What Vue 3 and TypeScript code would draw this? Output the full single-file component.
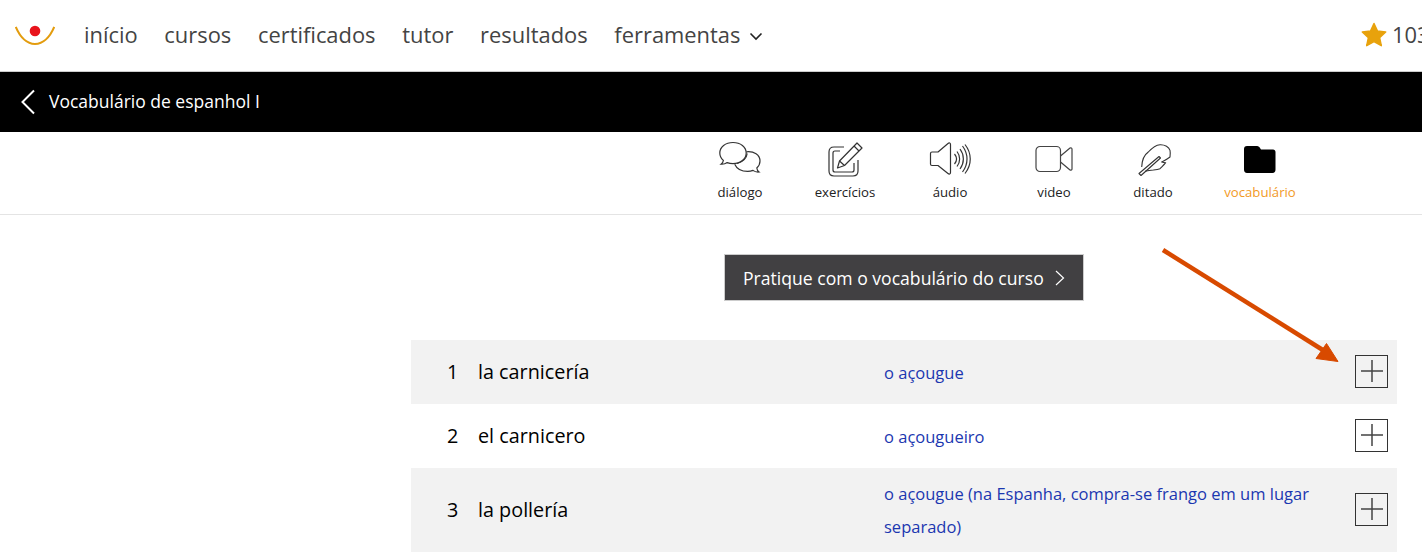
<script setup lang="ts">
const links = ['início', 'cursos', 'certificados', 'tutor', 'resultados']
const rows = [
  { n: 1, word: 'la carnicería', tr: 'o açougue', alt: true },
  { n: 2, word: 'el carnicero', tr: 'o açougueiro', alt: false },
  { n: 3, word: 'la pollería', tr: 'o açougue (na Espanha, compra-se frango em um lugar separado)', alt: true },
]
</script>

<template>
  <div class="page">
    <header class="nav">
      <svg class="logo" width="40" height="22" viewBox="0 0 40 22">
        <path d="M0.800 2C5 12 12 19 20 19S35 12 39.200 2" fill="none" stroke="#e39c0e" stroke-width="2" />
        <circle cx="20" cy="6" r="5.300" fill="#e8141c" />
      </svg>
      <nav class="links">
        <a v-for="l in links" :key="l">{{ l }}</a>
        <a class="tools">ferramentas
          <svg width="14" height="9" viewBox="0 0 14 9"><path d="M1.500 1.500L7 7L12.500 1.500" fill="none" stroke="#222" stroke-width="1.600" /></svg>
        </a>
      </nav>
      <div class="score">
        <svg width="26" height="25" viewBox="0 0 26 25"><path d="M13 1.500l3.500 7.600 8.200.9-6.100 5.600 1.700 8.100-7.300-4.100-7.300 4.100 1.700-8.100L1.300 10l8.200-.9z" fill="#e8a20c" stroke="#e8a20c" stroke-width="1.500" stroke-linejoin="round" /></svg>
        <span>1030</span>
      </div>
    </header>

    <div class="course">
      <svg width="16" height="26" viewBox="0 0 16 26"><path d="M14 1.500L2.500 13L14 24.500" fill="none" stroke="#fff" stroke-width="2" /></svg>
      <span class="course-title">Vocabulário de espanhol I</span>
    </div>

    <div class="tabs">
      <div class="tab t1">
        <svg width="44" height="36" viewBox="0 0 44 36" fill="none" stroke="#333" stroke-width="1.200">
          <path d="M15 1.500C7.500 1.500 1.800 6 1.800 12c0 3 1.400 5.600 3.600 7.400-.2 1.400-1 2.800-2.400 3.800 2.400.2 4.600-.4 6.200-1.600 1.800.7 3.600 1 5.800 1 7.500 0 13.200-4.600 13.200-10.600S22.500 1.500 15 1.500z" />
          <path d="M28.500 10.800C36 10 42 14 42 20c0 3-1.400 5.400-3.200 7 .2 1.500.8 3 2.200 4-2.300.2-4.500-.4-6-1.600-1.700.7-3.500 1-5.300 1-6 0-11-2.800-13-7.200" />
          <path d="M29.200 12.500c-.6 4.500-4.600 8.500-10.200 10" />
        </svg>
        <span>diálogo</span>
      </div>
      <div class="tab t2">
        <svg width="36" height="36" viewBox="0 0 36 36" fill="none" stroke="#333" stroke-width="1.200" stroke-linejoin="round">
          <path d="M17 6H7C3.500 6 2 8 2 11v19c0 3.500 2 5 5 5h19c3.500 0 5-2 5-5V19" />
          <path d="M13 10H8C6.500 10 6 11 6 12v17c0 1.500.8 2 2 2h17c1.500 0 2-.8 2-2v-7" />
          <path d="M30 2l5 5-17.500 17.500-7 2.500 2-7z" />
          <path d="M27 5l5 5M12.500 20l5 4.500" />
        </svg>
        <span>exercícios</span>
      </div>
      <div class="tab t3">
        <svg width="42" height="34" viewBox="0 0 42 34" fill="none" stroke="#333" stroke-width="1.200" stroke-linejoin="round">
          <path d="M1.500 11.500C1.500 10.500 2 10 3 10h6L19 1.500c1.200-1 2.500-.5 2.500 1v28c0 1.500-1.300 2-2.500 1L9 23.500H3c-1 0-1.500-.5-1.500-1.500z" />
          <path d="M25.500 12c2.500 3 2.500 7 0 10M28 9.500c3.500 4.500 3.500 10.500 0 15M31 7c4.500 6 4.500 14 0 20M33.500 4c6 8 6 18 0 26M36 2.500c7 9 7 20 0 29" />
        </svg>
        <span>áudio</span>
      </div>
      <div class="tab t4">
        <svg width="38" height="27" viewBox="0 0 38 27" fill="none" stroke="#444" stroke-width="1.200" stroke-linejoin="round">
          <rect x="1" y="1" width="24.500" height="25" rx="4" />
          <path d="M25.500 10.500L35 2.500c1-.5 2 0 2 1v20c0 1-1 1.500-2 1l-9.500-8" />
        </svg>
        <span>video</span>
      </div>
      <div class="tab t5">
        <svg width="34" height="34" viewBox="0 0 34 34" fill="none" stroke="#333" stroke-width="1.100" stroke-linejoin="round">
          <path d="M3.700 24C4 17 6 12 10.300 9 14 5 18 2 22 1.700 27 1.500 31 4 32 7.300c.5 2 .3 4 0 6.700-2.500 2-5.500 3.500-8.300 5 1.300.5 2.800.7 4 .7-2 2.500-3.800 4-5.700 6-2.200.7-4.500 1-6.700 1.300-2.700.2-5 .5-8.300 1.300" />
          <path d="M1 30.500L21 13.500l1.500 1.500L3 32.500z" />
        </svg>
        <span>ditado</span>
      </div>
      <div class="tab t6 active">
        <svg width="32" height="28" viewBox="0 0 32 28"><path d="M3 1h10c1.500 0 2.500 1 3 2l1 1.500h12c1.500 0 2.500 1 2.500 2.500v17.500c0 2-1 3.500-3 3.500H3c-2 0-3-1.500-3-3.500V4C0 2 1 1 3 1z" fill="#000" /></svg>
        <span>vocabulário</span>
      </div>
    </div>

    <div class="cta-wrap">
      <button class="cta" type="button">
        Pratique com o vocabulário do curso
        <svg width="10" height="16" viewBox="0 0 10 16"><path d="M1 1l7.500 7L1 15" fill="none" stroke="#fff" stroke-width="1.200" /></svg>
      </button>
    </div>

    <div class="list">
      <div v-for="r in rows" :key="r.n" class="row" :class="{ alt: r.alt }">
        <span class="num">{{ r.n }}</span>
        <span class="word">{{ r.word }}</span>
        <span class="tr">{{ r.tr }}</span>
        <span class="plus">
          <svg width="22" height="22" viewBox="0 0 22 22"><path d="M11 0v22M0 11h22" stroke="#444" stroke-width="1.500" /></svg>
        </span>
      </div>
    </div>

    <svg class="arrow" width="190" height="125" viewBox="0 0 190 125">
      <path d="M2 2L165 104" stroke="#d84a00" stroke-width="4.500" />
      <path d="M177 113.500L155 110.500L165.500 95.500z" fill="#d84a00" stroke="#d84a00" stroke-linejoin="round" />
    </svg>
  </div>
</template>

<style>
html, body { margin: 0; background: #fff; overflow: hidden; }
</style>

<style scoped>
.page {
  position: relative;
  width: 1422px;
  height: 552px;
  overflow: hidden;
  font-family: "Open Sans", sans-serif;
  color: #000;
}
.nav {
  height: 71px;
  display: flex;
  align-items: center;
  padding-left: 15px;
  border-bottom: 1px solid #ccc;
  white-space: nowrap;
}
.logo { flex: none; }
.links {
  display: flex;
  align-items: center;
  gap: 26.700px;
  margin-left: 29px;
  padding-bottom: 2px;
  font-size: 21.900px;
  color: #444;
}
.tools { display: flex; align-items: center; gap: 9px; }
.tools svg { margin-top: 4px; }
.score {
  margin-left: auto;
  display: flex;
  align-items: center;
  gap: 5px;
  font-size: 21.900px;
  color: #444;
  position: relative;
  left: 20px;
  padding-bottom: 2px;
}
.course {
  height: 60px;
  background: #000;
  color: #fff;
  display: flex;
  align-items: center;
  gap: 13px;
  padding-left: 20px;
  font-size: 17.500px;
}
.course-title { margin-bottom: 2px; }
.tabs {
  height: 82px;
  border-bottom: 1px solid #e4e4e4;
  position: relative;
  box-sizing: content-box;
  display: flex;
  padding-left: 700px;
}
.tab {
  display: flex;
  flex-direction: column;
  align-items: center;
  font-size: 13.200px;
  color: #222;
  height: 82px;
  width: 80px;
  flex: none;
}
.tab svg { height: 36px; margin-top: 9px; }
.tab span { position: absolute; top: 51px; line-height: 18px; }
.t1 { margin-left: 0; }
.t2 { margin-left: 25px; }
.t3 { margin-left: 25px; }
.t4 { margin-left: 24px; }
.t5 { margin-left: 19px; }
.t5 svg { margin-left: 3px; margin-top: 10px; }
.t6 { margin-left: 27px; }
.active { color: #f29a1f; }
.cta-wrap { display: flex; padding: 39px 0 0 724px; }
.cta {
  width: 360px;
  height: 47px;
  box-sizing: border-box;
  background: #414042;
  border: 1px solid #ccc;
  color: #fff;
  font: 17.600px "Open Sans", sans-serif;
  display: flex;
  align-items: center;
  justify-content: space-between;
  padding: 0 18px;
}
.list { margin: 39px 25px 0 411px; }
.row {
  display: grid;
  grid-template-columns: 67px 406px 1fr 33px;
  align-items: center;
  min-height: 64px;
  padding-right: 9px;
  box-sizing: border-box;
}
.row:last-child { height: 84px; }
.alt { background: #f2f2f2; }
.num { font-size: 19.800px; padding-left: 36px; margin-bottom: 2px; }
.word { font-size: 19.800px; margin-bottom: 2px; }
.tr { font-size: 16.500px; line-height: 33px; color: #1b37b0; padding-right: 20px; }
.plus {
  width: 33px;
  height: 33px;
  box-sizing: border-box;
  border: 1px solid #333;
  margin-bottom: 2px;
  display: flex;
  align-items: center;
  justify-content: center;
}
.arrow { position: absolute; left: 1161px; top: 248px; }
</style>
